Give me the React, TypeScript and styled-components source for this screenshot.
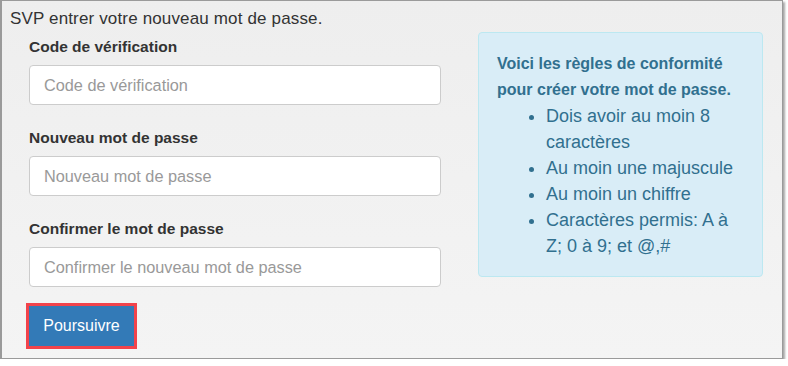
import React from 'react';
import styled, { createGlobalStyle } from 'styled-components';

const GlobalStyle = createGlobalStyle`
  html, body {
    margin: 0;
    padding: 0;
    background: #ffffff;
  }
  * {
    box-sizing: border-box;
  }
`;

const rules = [
  'Dois avoir au moin 8 caractères',
  'Au moin une majuscule',
  'Au moin un chiffre',
  'Caractères permis: A à Z; 0 à 9; et @,#',
];

const fields = [
  { label: 'Code de vérification', placeholder: 'Code de vérification', type: 'text' },
  { label: 'Nouveau mot de passe', placeholder: 'Nouveau mot de passe', type: 'password' },
  {
    label: 'Confirmer le mot de passe',
    placeholder: 'Confirmer le nouveau mot de passe',
    type: 'password',
  },
];

const App: React.FC = () => {
  return (
    <>
      <GlobalStyle />
      <Frame>
        <Intro>SVP entrer votre nouveau mot de passe.</Intro>
        <Row>
          <FormColumn>
            {fields.map((f) => (
              <FormGroup key={f.label}>
                <Label>{f.label}</Label>
                <Input type={f.type} placeholder={f.placeholder} />
              </FormGroup>
            ))}
            <ButtonHighlight>
              <SubmitButton type="button">Poursuivre</SubmitButton>
            </ButtonHighlight>
          </FormColumn>
          <InfoPanel>
            <InfoTitle>Voici les règles de conformité pour créer votre mot de passe.</InfoTitle>
            <RuleList>
              {rules.map((r) => (
                <Rule key={r}>{r}</Rule>
              ))}
            </RuleList>
          </InfoPanel>
        </Row>
      </Frame>
    </>
  );
};

export default App;

const Frame = styled.div`
  width: 783px;
  height: 359px;
  border: 1px solid #9a9a9a;
  border-left-width: 2px;
  box-shadow: 2px 2px 2px rgba(0, 0, 0, 0.35);
  background: linear-gradient(#eeeeee, #f4f4f4);
  padding: 7px 9px 0 8px;
  font-family: 'Liberation Sans', Arial, sans-serif;
  color: #333333;
`;

const Intro = styled.div`
  font-size: 17px;
  line-height: 22px;
  letter-spacing: 0.15px;
`;

const Row = styled.div`
  display: flex;
  align-items: flex-start;
  margin-top: 2px;
`;

const FormColumn = styled.div`
  width: 412px;
  margin-left: 19px;
  padding-top: 4px;
  display: flex;
  flex-direction: column;
  align-items: flex-start;
`;

const FormGroup = styled.div`
  width: 100%;
  & + & {
    margin-top: 22px;
  }
`;

const Label = styled.div`
  font-weight: bold;
  font-size: 15.5px;
  line-height: 22px;
  color: #333333;
  margin-bottom: 7px;
`;

const Input = styled.input`
  display: block;
  width: 100%;
  height: 40px;
  padding: 6px 14px;
  border: 1px solid #cccccc;
  border-radius: 4px;
  background: #ffffff;
  font-family: 'Liberation Sans', Arial, sans-serif;
  font-size: 16.3px;
  color: #555555;
  outline: none;
  &::placeholder {
    color: #999999;
  }
`;

const ButtonHighlight = styled.div`
  margin: 16px 0 0 -3px;
  border: 3px solid #f2434b;
`;

const SubmitButton = styled.button`
  display: block;
  width: 105px;
  height: 40px;
  border: none;
  background: #337ab7;
  color: #ffffff;
  font-family: 'Liberation Sans', Arial, sans-serif;
  font-size: 16px;
  padding: 0;
  cursor: pointer;
`;

const InfoPanel = styled.div`
  width: 285px;
  height: 245px;
  margin-left: 37px;
  background: #d9edf7;
  border: 1px solid #bce8f1;
  border-radius: 4px;
  padding: 18px 17px 0 18px;
  color: #31708f;
`;

const InfoTitle = styled.div`
  font-weight: bold;
  font-size: 16px;
  line-height: 26px;
`;

const RuleList = styled.ul`
  margin: 0;
  padding-left: 49px;
  font-size: 18px;
  line-height: 26px;
`;

const Rule = styled.li``;
